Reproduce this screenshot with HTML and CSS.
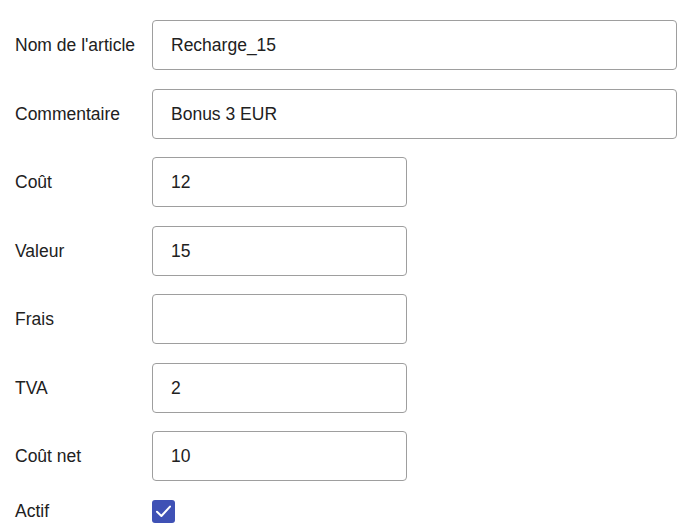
FILE: index.html
```html
<!DOCTYPE html>
<html lang="fr">
<head>
<meta charset="utf-8">
<link rel="stylesheet" href="styles.css">
</head>
<body>
<form class="form">
  <label class="lbl">Nom de l'article</label>
  <input class="field wide" type="text" value="Recharge_15">
  <label class="lbl">Commentaire</label>
  <input class="field wide" type="text" value="Bonus 3 EUR">
  <label class="lbl">Coût</label>
  <input class="field short" type="text" value="12">
  <label class="lbl">Valeur</label>
  <input class="field short" type="text" value="15">
  <label class="lbl">Frais</label>
  <input class="field short" type="text" value="">
  <label class="lbl">TVA</label>
  <input class="field short" type="text" value="2">
  <label class="lbl">Coût net</label>
  <input class="field short" type="text" value="10">
  <label class="lbl">Actif</label>
  <span class="check"><svg viewBox="0 0 23 23" width="23" height="23"><rect width="23" height="23" rx="3" fill="#3f51b5"/><path d="M5 11.8 L9.4 16 L18 6.6" fill="none" stroke="#fff" stroke-width="2" stroke-linecap="round" stroke-linejoin="round"/></svg></span>
</form>
</body>
</html>
```
FILE: styles.css
```css
html, body {
  margin: 0;
  padding: 0;
  background: #fff;
}
body {
  font-family: "Liberation Sans", Arial, sans-serif;
  font-size: 17.5px;
  color: #212121;
}
.form {
  display: grid;
  grid-template-columns: 137px 1fr;
  grid-auto-rows: auto;
  row-gap: 18.5px;
  align-items: center;
  padding: 20px 16px 0 15px;
}
.lbl {
  line-height: 22px;
}
.field {
  box-sizing: border-box;
  height: 50px;
  border: 1px solid #9e9e9e;
  border-radius: 4px;
  padding: 1px 18px 0;
  font-family: inherit;
  font-size: 17.5px;
  color: #212121;
  background: #fff;
  outline: none;
  margin: 0;
}
.wide {
  width: 100%;
}
.short {
  width: 255px;
}
.check {
  display: block;
  width: 23px;
  height: 23px;
}
.check svg {
  display: block;
}
```
